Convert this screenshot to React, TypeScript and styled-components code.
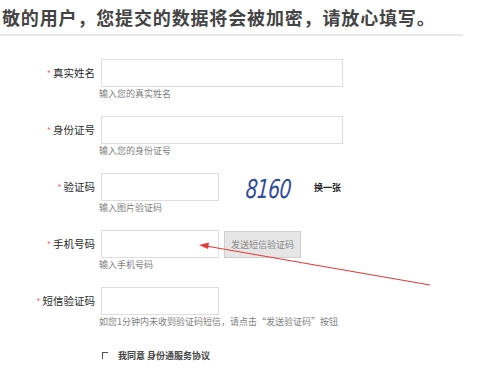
import React from "react";
import styled, { createGlobalStyle } from "styled-components";

const Global = createGlobalStyle`
  html, body { margin: 0; padding: 0; background: #fff; }
  body { font-family: "Noto Sans CJK SC", "Noto Sans", sans-serif; color: #333; }
  * { box-sizing: border-box; }
`;

const Page = styled.div`
  position: relative;
  width: 478px;
  height: 374px;
  overflow: hidden;
`;

const Header = styled.h1`
  margin: 0;
  width: 463px;
  padding: 7px 0 7px 2px;
  font-family: "Noto Sans CJK SC", sans-serif;
  font-size: 18px;
  line-height: 20px;
  font-weight: 700;
  letter-spacing: 0.85px;
  color: #444;
  white-space: nowrap;
  border-bottom: 2px solid #e8e8e8;
`;

const Form = styled.div`
  margin-top: 23px;
  display: flex;
  flex-direction: column;
`;

const Row = styled.div`
  display: flex;
  column-gap: 6px;
  margin-bottom: 15px;
`;

const Label = styled.div`
  width: 95px;
  height: 28px;
  line-height: 28px;
  text-align: right;
  font-size: 10.5px;
  color: #2a2a2a;
  white-space: nowrap;
`;

const Star = styled.span`
  color: #e8707a;
  font-size: 9px;
  margin-right: 2px;
`;

const Field = styled.div`
  display: flex;
  flex-direction: column;
`;

const Control = styled.div`
  display: flex;
  align-items: center;
  height: 28px;
`;

const Input = styled.div<{ $w: number }>`
  width: ${(p) => p.$w}px;
  height: 28px;
  border: 1px solid #dedede;
  background: #fff;
`;

const Hint = styled.div`
  height: 14px;
  line-height: 14px;
  font-size: 9px;
  color: #808080;
  white-space: nowrap;
  margin-left: -2px;
`;

const Captcha = styled.div`
  margin-left: 27px;
  margin-top: 4px;
  width: 50px;
  font-family: "DejaVu Sans", sans-serif;
  font-style: italic;
  font-size: 26px;
  line-height: 28px;
  color: #2e4b9c;
  letter-spacing: -1px;
  transform: scaleX(0.72) skewX(-6deg);
  transform-origin: left center;
`;

const Refresh = styled.div`
  margin-left: 18px;
  font-size: 9px;
  font-weight: 700;
  color: #222;
`;

const SendButton = styled.div`
  margin-left: 5px;
  width: 77px;
  height: 27px;
  line-height: 25px;
  text-align: center;
  font-size: 9px;
  color: #888;
  background: #e6e6e6;
  border: 1px solid #cfcfcf;
  white-space: nowrap;
`;

const AgreeRow = styled.div`
  display: flex;
  align-items: center;
  padding-left: 102px;
  height: 22px;
  font-size: 9px;
  font-weight: 700;
  color: #444;
`;

const Check = styled.span`
  display: inline-block;
  width: 6px;
  height: 7px;
  border-top: 1px solid #555;
  border-left: 1px solid #555;
  margin-right: 10px;
`;

const Arrow = styled.svg`
  position: absolute;
  left: 0;
  top: 0;
  pointer-events: none;
`;

export default function App() {
  return (
    <Page>
      <Global />
      <Header>敬的用户，您提交的数据将会被加密，请放心填写。</Header>
      <Form>
        <Row>
          <Label><Star>*</Star>真实姓名</Label>
          <Field>
            <Control><Input $w={242} /></Control>
            <Hint>输入您的真实姓名</Hint>
          </Field>
        </Row>
        <Row>
          <Label><Star>*</Star>身份证号</Label>
          <Field>
            <Control><Input $w={242} /></Control>
            <Hint>输入您的身份证号</Hint>
          </Field>
        </Row>
        <Row>
          <Label><Star>*</Star>验证码</Label>
          <Field>
            <Control>
              <Input $w={118} />
              <Captcha>8160</Captcha>
              <Refresh>换一张</Refresh>
            </Control>
            <Hint>输入图片验证码</Hint>
          </Field>
        </Row>
        <Row>
          <Label><Star>*</Star>手机号码</Label>
          <Field>
            <Control>
              <Input $w={118} />
              <SendButton>发送短信验证码</SendButton>
            </Control>
            <Hint>输入手机号码</Hint>
          </Field>
        </Row>
        <Row>
          <Label><Star>*</Star>短信验证码</Label>
          <Field>
            <Control><Input $w={118} /></Control>
            <Hint>如您1分钟内未收到验证码短信，请点击“发送验证码”按钮</Hint>
          </Field>
        </Row>
        <AgreeRow>
          <Check />
          我同意 身份通服务协议
        </AgreeRow>
      </Form>
      <Arrow width="478" height="374" viewBox="0 0 478 374">
        <line x1="430" y1="285" x2="206" y2="246" stroke="#e53a3a" strokeWidth="1.2" />
        <polygon points="199,245 209,242.5 208,249" fill="#e53a3a" />
      </Arrow>
    </Page>
  );
}
